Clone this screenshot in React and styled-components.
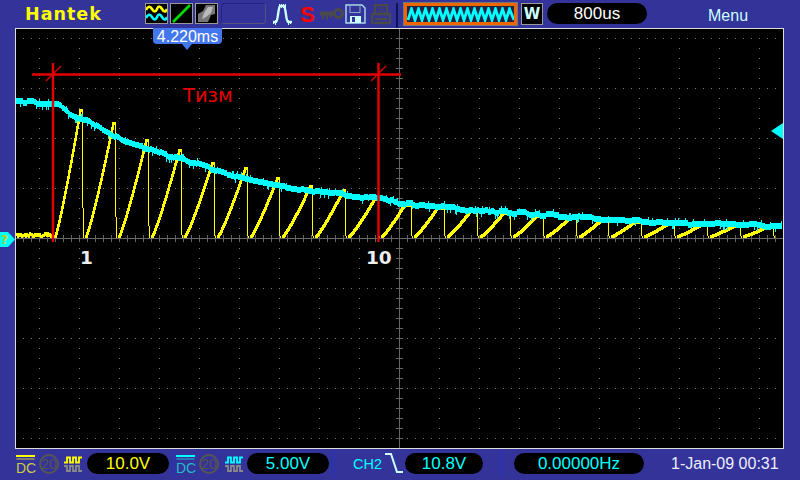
import styled, { createGlobalStyle } from 'styled-components'

const GlobalStyle = createGlobalStyle`
  html, body {
    margin: 0;
    padding: 0;
    background: #333399;
    font-family: "Liberation Sans", sans-serif;
  }
`

// seeded noise so the traces come out the same on every load
const makeRandom = (seed) => {
  let s = seed
  return () => {
    s = (s * 16807) % 2147483647
    return s / 2147483647
  }
}

const CYAN_POINTS = [
  [16, 102], [55, 103], [60, 105], [65, 109], [70, 115], [80, 119], [90, 121], [100, 129],
  [115, 136], [130, 143], [150, 149], [165, 155], [180, 158], [200, 165], [225, 173],
  [250, 180], [270, 184], [300, 189], [340, 194], [380, 199], [400, 203], [420, 205],
  [470, 210], [520, 213], [560, 216], [600, 219], [650, 222], [700, 224], [782, 226],
]

const cyanAt = (x) => {
  for (let i = 1; i < CYAN_POINTS.length; i++) {
    const [x0, y0] = CYAN_POINTS[i - 1]
    const [x1, y1] = CYAN_POINTS[i]
    if (x <= x1) return y0 + ((y1 - y0) * (x - x0)) / (x1 - x0)
  }
  return 226
}

const buildCyan = () => {
  const rnd = makeRandom(4711)
  let d = ''
  let jitter = 0
  let hold = 0
  for (let x = 16; x < 782; x++) {
    if (hold <= 0) {
      jitter = Math.round((rnd() - 0.5) * 2)
      hold = 3 + Math.floor(rnd() * 7)
    }
    hold--
    const mid = Math.round(cyanAt(x)) + jitter
    const up = rnd() > 0.92 ? 5 : 3
    const down = rnd() > 0.93 ? 6 : 3
    d += `M${x + 0.5} ${mid - up}V${mid + down}`
  }
  return d
}

const BASE = 236
const PEAKS = [110, 123, 140, 150, 163, 168, 178, 186, 190, 196]

const buildYellow = () => {
  const rnd = makeRandom(99)
  let thick = ''
  let thin = ''
  for (let x = 16; x < 53; x++) {
    const y = 235 + Math.round((rnd() - 0.5) * 2)
    thick += `M${x + 0.5} ${y - 1 - Math.round(rnd())}V${y + 2}`
  }
  let start = 54
  for (let n = 0; n < 22; n++) {
    const fall = Math.round(82 + 32.9 * n)
    const peak = n < PEAKS.length ? PEAKS[n] : Math.round(cyanAt(fall)) + 1
    const riseEnd = n < 10 ? fall - 3 : fall - 8
    const span = riseEnd - start
    let prev = BASE
    for (let x = start; x < fall; x++) {
      const t = Math.min(1, (x - start) / span)
      const y = Math.round(BASE - (BASE - peak) * Math.pow(t, 1.15))
      thick += `M${x + 0.5} ${Math.min(y, prev) - 1}V${Math.max(y, prev) + 2}`
      prev = y
    }
    const shortDrop = Math.min(BASE, 208 + n * 9)
    thin += `M${fall + 0.5} ${peak}V${shortDrop}M${fall + 1.5} ${shortDrop}V${BASE + 2}`
    start = fall + 3
  }
  return { thick, thin }
}

const buildGrid = () => {
  let dots = ''
  let ticks = ''
  for (let y = 38; y < 448; y += 50) {
    if (y === 238) continue
    for (let x = 399 - 48 * 8; x < 783; x += 8) dots += `M${x} ${y}h1v1h-1z`
  }
  for (let x = 39; x < 783; x += 40) {
    if (x === 399) continue
    for (let y = 38; y < 448; y += 10) dots += `M${x} ${y}h1v1h-1z`
  }
  for (let x = 399 - 48 * 8; x < 783; x += 8) ticks += `M${x + 0.5} 235V242`
  for (let y = 38; y < 448; y += 10) ticks += `M396 ${y + 0.5}H403`
  return { dots, ticks }
}

const cyanPath = buildCyan()
const yellowPaths = buildYellow()
const gridPaths = buildGrid()

const ProbeIcon = ({ color, ml }) => (
  <ProbeSvg $ml={ml} width="18" height="16" viewBox="0 0 18 16" fill="none" strokeWidth="1.8">
    <path d="M0 6.5H3V1.5H6V6.5H9V1.5H12V6.5H15V1.5H18" stroke={color} />
    <path d="M0 10H3V15H6V10H9V15H12V10H15V15H18" stroke="#888888" />
  </ProbeSvg>
)

const App = () => (
  <Page>
    <GlobalStyle />
    <TopBar>
      <Logo>Hantek</Logo>
      <IconBox>
        <svg width="21" height="19" viewBox="0 0 21 19" fill="none" strokeWidth="2.6">
          <path d="M0 6 Q3 0 6 5 T11 5 T16 5 T21 5" stroke="#ffff00" />
          <path d="M0 14 Q3 8 6 13 T11 13 T16 13 T21 13" stroke="#00ffff" />
        </svg>
      </IconBox>
      <IconBox>
        <svg width="21" height="19" viewBox="0 0 21 19" fill="none">
          <path d="M2 18 L19 1" stroke="#00dd00" strokeWidth="2.6" />
        </svg>
      </IconBox>
      <IconBox>
        <svg width="21" height="19" viewBox="0 0 21 19">
          <path d="M2 18 V10 L7 7 L10 1 H19 V10 L15 11 L12 18 Z" fill="#777777" />
          <path d="M6 15 L8 9 L12 3 H17 L15 9 L10 13 Z" fill="#bbbbbb" />
        </svg>
      </IconBox>
      <BlankBox />
      <PlainIcon $ml={6}>
        <svg width="21" height="22" viewBox="0 0 21 22" fill="none" stroke="#ccffff">
          <path d="M1 19 H4 C6 19 6 5 8 3 H12 C14 5 14 19 16 19 H20" strokeWidth="2.4" />
          <path d="M7.5 1V5M9.5 1V5M11.5 1V5M13.5 1V5M3.5 17V22M1.5 18V21M16.5 17V22M18.5 18V21" strokeWidth="1" />
        </svg>
      </PlainIcon>
      <Stop>S</Stop>
      <PlainIcon $ml={6}>
        <svg width="24" height="14" viewBox="0 0 24 14" fill="none" stroke="#4a4a4a">
          <circle cx="18.5" cy="6.5" r="4" strokeWidth="3" />
          <path d="M0 6.5 H14" strokeWidth="4" />
          <path d="M3 8V12M7 8V13M11 8V11" strokeWidth="2" />
        </svg>
      </PlainIcon>
      <PlainIcon $ml={1}>
        <svg width="21" height="20" viewBox="0 0 21 20">
          <path d="M1 1 H17 L20 4 V19 H1 Z" fill="#333399" stroke="#aaddee" strokeWidth="1.4" />
          <rect x="5" y="1.5" width="10" height="7" fill="none" stroke="#88aacc" />
          <rect x="5" y="12" width="11" height="7" fill="#ccffff" />
          <rect x="7" y="13" width="3" height="5" fill="#333399" />
        </svg>
      </PlainIcon>
      <PlainIcon $ml={5}>
        <svg width="20" height="21" viewBox="0 0 20 21" fill="none" stroke="#4a4a4a" strokeWidth="2.4">
          <rect x="4" y="1" width="12" height="9" />
          <path d="M7 4H13M7 7H13" strokeWidth="1" />
          <rect x="1" y="10" width="18" height="9" rx="1" />
          <path d="M4 15H16" />
        </svg>
      </PlainIcon>
      <Divider $ml={5} $width={2} $height={25} $color="#111155" />
      <WaveBox>
        <svg width="107" height="15" viewBox="0 0 107 15" fill="none">
          <path
            d={Array.from({ length: 15 }, (_, i) => `${i === 0 ? 'M' : 'L'}${i * 7 + 1} 13L${i * 7 + 4.5} 2`).join('') + 'L107 13'}
            stroke="#00ffff"
            strokeWidth="2.8"
          />
        </svg>
      </WaveBox>
      <ModeBox>W</ModeBox>
      <Readout $ml={4} $width={100} $color="#ffffff">800us</Readout>
      <MenuLabel>Menu</MenuLabel>
    </TopBar>
    <Middle>
      <Screen>
        <Scope width="767" height="419" viewBox="16 29 767 419">
          <path d={gridPaths.dots} fill="#777777" />
          <path d="M16 238.5H783M399.5 29V448" stroke="#666666" fill="none" />
          <path d={gridPaths.ticks} stroke="#666666" fill="none" />
          <path d={yellowPaths.thick} stroke="#ffff00" strokeWidth="2" fill="none" shapeRendering="crispEdges" />
          <path d={yellowPaths.thin} stroke="#ffff00" fill="none" shapeRendering="crispEdges" />
          <path d={cyanPath} stroke="#00ffff" fill="none" shapeRendering="crispEdges" />
          <path d="M32 74.5H401" stroke="#e60000" strokeWidth="2.4" fill="none" />
          <path d="M53 63V242M378.5 63V242" stroke="#e60000" strokeWidth="2.4" fill="none" />
          <path d="M46 81L61 66M371 81L386 66" stroke="#e00000" strokeWidth="1.4" fill="none" />
          <path d="M783 123V139L771 131Z" fill="#00ffff" />
        </Scope>
        <Cursor>4.220ms</Cursor>
        <MeasureLabel>Тизм</MeasureLabel>
        <PulseCount $left={64}>1</PulseCount>
        <PulseCount $left={350}>10</PulseCount>
        <GroundMark>
          <svg width="15" height="15" viewBox="0 0 15 15">
            <path d="M0 0H8L15 7.5L8 15H0Z" fill="#00ffff" />
            <text x="1" y="12" fontSize="12" fontWeight="700" fill="#cccc00" fontFamily="DejaVu Sans">?</text>
          </svg>
        </GroundMark>
      </Screen>
    </Middle>
    <BottomBar>
      <Coupling $color="#cccc44" $line="#ffff00"><i />DC</Coupling>
      <Limit>20</Limit>
      <ProbeIcon color="#ffff00" ml={5} />
      <Readout $ml={5} $width={82} $color="#ffff00">10.0V</Readout>
      <Divider $ml={3} $width={1} $height={26} $color="#1a33cc" />
      <Coupling $ml={3} $color="#22bbcc" $line="#00ffff"><i />DC</Coupling>
      <Limit>20</Limit>
      <ProbeIcon color="#00ffff" ml={6} />
      <Readout $ml={4} $width={82} $color="#00ffff">5.00V</Readout>
      <Divider $ml={3} $width={1} $height={26} $color="#1a33cc" />
      <ChannelName>CH2</ChannelName>
      <svg width="18" height="21" viewBox="0 0 18 21" fill="none" stroke="#ccffff" strokeWidth="2">
        <path d="M0 1H6L12 19H18" />
      </svg>
      <Readout $ml={2} $width={78} $color="#00ffff">10.8V</Readout>
      <Divider $ml={18} $width={1} $height={26} $color="#1a33cc" />
      <Readout $ml={12} $width={130} $color="#00ffff">0.00000Hz</Readout>
      <Clock>1-Jan-09 00:31</Clock>
    </BottomBar>
  </Page>
)

export default App

const Page = styled.div`
  width: 800px;
  height: 480px;
  overflow: hidden;
  display: flex;
  flex-direction: column;
  background: #333399;
`

const TopBar = styled.header`
  flex: none;
  height: 28px;
  box-sizing: border-box;
  padding: 3px 0 0 25px;
  display: flex;
  align-items: flex-start;
`

const Logo = styled.div`
  flex: none;
  width: 120px;
  margin-top: 1px;
  font-family: "DejaVu Sans", sans-serif;
  font-weight: 700;
  font-size: 17.5px;
  letter-spacing: 1px;
  line-height: 20px;
  color: #ffff00;
`

const IconBox = styled.div`
  flex: none;
  width: 23px;
  height: 21px;
  margin-right: 2px;
  box-sizing: border-box;
  border: 1px solid #999999;
  background: #000000;
  display: flex;
  align-items: center;
  justify-content: center;
`

const BlankBox = styled.div`
  flex: none;
  width: 45px;
  height: 21px;
  margin-left: 1px;
  box-sizing: border-box;
  border: 1px solid #222288;
  border-right-color: #555577;
  border-bottom-color: #555577;
  border-radius: 4px;
`

const PlainIcon = styled.div`
  flex: none;
  margin-left: ${(p) => p.$ml}px;
  height: 22px;
  display: flex;
  align-items: center;
`

const Stop = styled.div`
  flex: none;
  margin-left: 7px;
  width: 14px;
  font-weight: 700;
  font-size: 22px;
  line-height: 24px;
  color: #ff0000;
`

const Divider = styled.div`
  flex: none;
  width: ${(p) => p.$width}px;
  height: ${(p) => p.$height}px;
  margin-left: ${(p) => p.$ml}px;
  background: ${(p) => p.$color};
`

const WaveBox = styled.div`
  flex: none;
  width: 113px;
  height: 22px;
  margin-left: 6px;
  box-sizing: border-box;
  border: 3px solid #ee6600;
  outline: 1px solid #777777;
  background: #222244;
  display: flex;
  align-items: center;
  justify-content: center;
`

const ModeBox = styled.div`
  flex: none;
  width: 22px;
  height: 22px;
  margin-left: 4px;
  box-sizing: border-box;
  border: 1px solid #999999;
  background: #000000;
  color: #ccffff;
  font-family: "DejaVu Sans", sans-serif;
  font-weight: 700;
  font-size: 15px;
  line-height: 20px;
  text-align: center;
`

const Readout = styled.div`
  flex: none;
  width: ${(p) => p.$width}px;
  height: 21px;
  margin-left: ${(p) => p.$ml}px;
  border-radius: 11px;
  background: #000000;
  color: ${(p) => p.$color};
  font-size: 17px;
  line-height: 21px;
  text-align: center;
`

const MenuLabel = styled.div`
  flex: none;
  margin-left: 61px;
  margin-top: 3px;
  font-size: 16px;
  line-height: 20px;
  color: #ccffff;
`

const Middle = styled.main`
  flex: none;
  height: 421px;
  padding-left: 15px;
`

const Screen = styled.section`
  position: relative;
  width: 767px;
  height: 419px;
  border: 1px solid #dddddd;
  background: #000000;
`

const Scope = styled.svg`
  display: block;
`

const Cursor = styled.div`
  position: absolute;
  left: 137px;
  top: -1px;
  width: 69px;
  height: 16px;
  border-radius: 0 0 4px 4px;
  background: #4477ee;
  color: #ffffff;
  font-size: 16px;
  line-height: 17px;
  text-align: center;

  &::after {
    content: '';
    position: absolute;
    left: 29px;
    top: 16px;
    border-left: 5px solid transparent;
    border-right: 5px solid transparent;
    border-top: 6px solid #4477ee;
  }
`

const MeasureLabel = styled.div`
  position: absolute;
  left: 167px;
  top: 55px;
  font-family: "DejaVu Sans", sans-serif;
  font-size: 19.5px;
  line-height: 24px;
  color: #e80000;
`

const PulseCount = styled.div`
  position: absolute;
  left: ${(p) => p.$left}px;
  top: 217px;
  font-family: "DejaVu Sans", sans-serif;
  font-weight: 700;
  font-size: 18.5px;
  line-height: 24px;
  color: #eeeeee;
`

const GroundMark = styled.div`
  position: absolute;
  left: -16px;
  top: 203px;
  width: 15px;
  height: 15px;
`

const BottomBar = styled.footer`
  flex: none;
  height: 31px;
  box-sizing: border-box;
  padding: 0 0 2px 16px;
  display: flex;
  align-items: center;
`

const Coupling = styled.div`
  flex: none;
  width: 19px;
  margin-top: 2px;
  margin-left: ${(p) => p.$ml || 0}px;
  font-size: 14px;
  line-height: 14px;
  color: ${(p) => p.$color};

  i {
    display: block;
    height: 2px;
    margin-bottom: 4px;
    background: ${(p) => p.$line};
    box-shadow: 0 3px 0 -0.5px ${(p) => p.$color};
  }
`

const Limit = styled.div`
  flex: none;
  width: 20px;
  height: 20px;
  margin-left: 4px;
  box-sizing: border-box;
  border: 2px solid #555555;
  border-radius: 50%;
  color: #555555;
  font-size: 14px;
  line-height: 16px;
  text-align: center;
`

const ProbeSvg = styled.svg`
  margin-left: ${(p) => p.$ml}px;
  flex: none;
`

const ChannelName = styled.div`
  flex: none;
  margin-left: 20px;
  width: 32px;
  font-size: 14.5px;
  color: #00ffff;
`

const Clock = styled.div`
  flex: none;
  margin-left: 27px;
  font-size: 16px;
  white-space: nowrap;
  color: #eeeeff;
`
